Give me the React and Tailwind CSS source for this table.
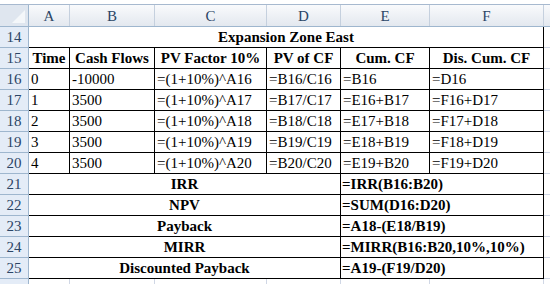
import React from "react";

const GRID = "border-[#d0d7e5]";

function RowHead({ n }) {
    return (
        <div className="w-[29px] shrink-0 h-full bg-[#e4ecf7] border-r border-b border-[#9eb6ce] text-[#2b4566] flex items-center justify-center text-[15px]">
            {n}
        </div>
    );
}

function Cell({ w, className = "", children }) {
    return (
        <div className={`${w} shrink-0 h-full border-r border-b flex items-center whitespace-nowrap overflow-hidden ${className}`}>
            {children}
        </div>
    );
}

function DataRow({ n, a, b, c, d, e, f }) {
    return (
        <div className="flex h-[21px]">
            <RowHead n={n} />
            <Cell w="w-[41px]" className="border-black pl-[2px]">{a}</Cell>
            <Cell w="w-[85px]" className="border-black pl-[2px]">{b}</Cell>
            <Cell w="w-[112px]" className="border-black pl-[2px]">{c}</Cell>
            <Cell w="w-[74px]" className="border-black pl-[2px]">{d}</Cell>
            <Cell w="w-[89px]" className="border-black pl-[2px]">{e}</Cell>
            <Cell w="w-[114px]" className="border-black pl-[2px]">{f}</Cell>
            <div className={`flex-1 h-full border-b ${GRID}`} />
        </div>
    );
}

function SummaryRow({ n, label, formula }) {
    return (
        <div className="flex h-[21px]">
            <RowHead n={n} />
            <Cell w="w-[312px]" className="border-black justify-center font-bold">{label}</Cell>
            <Cell w="w-[203px]" className="border-black pl-[1px] font-bold">{formula}</Cell>
            <div className={`flex-1 h-full border-b ${GRID}`} />
        </div>
    );
}

export default function App() {
    const cols = [
        { l: "A", w: "w-[41px]" },
        { l: "B", w: "w-[85px]" },
        { l: "C", w: "w-[112px]" },
        { l: "D", w: "w-[74px]" },
        { l: "E", w: "w-[89px]" },
        { l: "F", w: "w-[114px]" },
    ];

    const data = [
        { n: 16, a: "0", b: "-10000", c: "=(1+10%)^A16", d: "=B16/C16", e: "=B16", f: "=D16" },
        { n: 17, a: "1", b: "3500", c: "=(1+10%)^A17", d: "=B17/C17", e: "=E16+B17", f: "=F16+D17" },
        { n: 18, a: "2", b: "3500", c: "=(1+10%)^A18", d: "=B18/C18", e: "=E17+B18", f: "=F17+D18" },
        { n: 19, a: "3", b: "3500", c: "=(1+10%)^A19", d: "=B19/C19", e: "=E18+B19", f: "=F18+D19" },
        { n: 20, a: "4", b: "3500", c: "=(1+10%)^A20", d: "=B20/C20", e: "=E19+B20", f: "=F19+D20" },
    ];

    const summary = [
        { n: 21, label: "IRR", formula: "=IRR(B16:B20)" },
        { n: 22, label: "NPV", formula: "=SUM(D16:D20)" },
        { n: 23, label: "Payback", formula: "=A18-(E18/B19)" },
        { n: 24, label: "MIRR", formula: "=MIRR(B16:B20,10%,10%)" },
        { n: 25, label: "Discounted Payback", formula: "=A19-(F19/D20)" },
    ];

    return (
        <div className="w-[550px] h-[284px] overflow-hidden bg-white text-black text-[15px] leading-[20px] font-['Liberation_Serif',serif]">
            {/* formula bar edge */}
            <div className="h-[5px] bg-white border-b border-[#a7b9cf]" />

            {/* column headers */}
            <div className="flex h-[22px] border-b border-[#9eb6ce]">
                <div className="w-[29px] shrink-0 h-full bg-[#dfe6ef] border-r border-[#9eb6ce] relative">
                    <div className="absolute right-[3px] bottom-[3px] w-0 h-0 border-l-[13px] border-l-transparent border-b-[13px] border-b-[#f4f7fa]" />
                </div>
                {cols.map((c) => (
                    <div
                        key={c.l}
                        className={`${c.w} shrink-0 h-full bg-gradient-to-b from-[#f9fafc] to-[#e3e8ef] border-r border-[#c5d0de] text-[#2b4566] flex items-center justify-center`}
                    >
                        {c.l}
                    </div>
                ))}
                <div className="flex-1 h-full bg-gradient-to-b from-[#f9fafc] to-[#e3e8ef]" />
            </div>

            {/* row 14 title */}
            <div className="flex h-[21px]">
                <RowHead n={14} />
                <Cell w="w-[515px]" className="border-black justify-center font-bold">Expansion Zone East</Cell>
                <div className={`flex-1 h-full border-b ${GRID}`} />
            </div>

            {/* row 15 headers */}
            <div className="flex h-[21px]">
                <RowHead n={15} />
                <Cell w="w-[41px]" className="border-black justify-center font-bold">Time</Cell>
                <Cell w="w-[85px]" className="border-black justify-center font-bold">Cash Flows</Cell>
                <Cell w="w-[112px]" className="border-black justify-center font-bold">PV Factor 10%</Cell>
                <Cell w="w-[74px]" className="border-black justify-center font-bold">PV of CF</Cell>
                <Cell w="w-[89px]" className="border-black justify-center font-bold">Cum. CF</Cell>
                <Cell w="w-[114px]" className="border-black justify-center font-bold">Dis. Cum. CF</Cell>
                <div className={`flex-1 h-full border-b ${GRID}`} />
            </div>

            {data.map((r) => (
                <DataRow key={r.n} {...r} />
            ))}

            {summary.map((r) => (
                <SummaryRow key={r.n} {...r} />
            ))}

            {/* row 26, only its top edge is in view */}
            <div className="flex h-[21px]">
                <RowHead n="" />
                {cols.map((c) => (
                    <Cell key={c.l} w={c.w} className={GRID} />
                ))}
            </div>
        </div>
    );
}
